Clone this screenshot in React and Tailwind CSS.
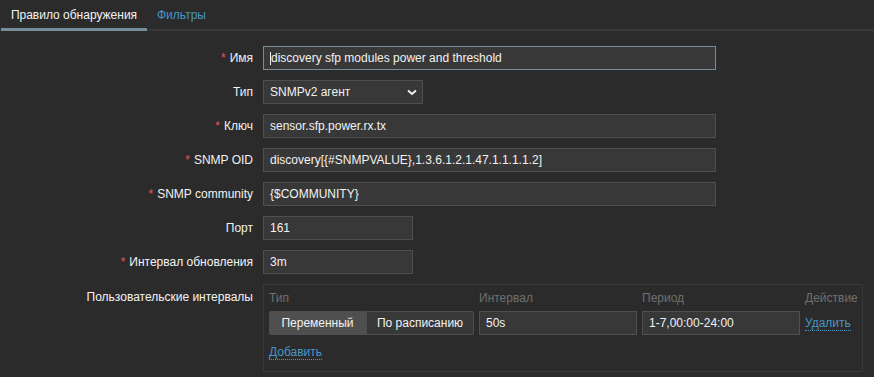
const inputCls =
  "h-[24px] bg-[#383838] border border-[#4f4f4f] px-[6px] flex items-center text-[#f2f2f2]";

function Row({ label, required, children }) {
  return (
    <div className="flex items-center mb-[10px]">
      <div className="w-[253px] text-right pr-0">
        {required && <span className="text-[#e45959] mr-[4px]">*</span>}
        {label}
      </div>
      <div className="ml-[10px]">{children}</div>
    </div>
  );
}

function App() {
  return (
    <div className="w-[874px] h-[377px] bg-[#2b2b2b] text-[#f2f2f2] text-[12px] leading-[14px] font-['Liberation_Sans',Arial,sans-serif] overflow-hidden">
      <div className="flex items-end h-[31px] border-b-[2px] border-[#383838]">
        <div className="ml-[1px] w-[146px] h-[31px] mb-[-2px] border-b-[3px] border-[#768d99] flex items-center justify-center pt-[1px]">
          Правило обнаружения
        </div>
        <div className="h-[29px] flex items-center pl-[10px] text-[#4796c4]">Фильтры</div>
      </div>

      <div className="pt-[15px]">
        <Row label="Имя" required>
          <div className={inputCls + " w-[453px] border-[#768d99]"}>
            <span className="w-[1px] h-[13px] bg-[#f2f2f2]" />
            discovery sfp modules power and threshold
          </div>
        </Row>
        <Row label="Тип">
          <div className={inputCls + " w-[160px] justify-between pr-[5px]"}>
            <span>SNMPv2 агент</span>
            <svg width="10" height="7" viewBox="0 0 10 7" className="mt-[1px]">
              <polyline points="1,1.5 5,5 9,1.5" fill="none" stroke="#f2f2f2" strokeWidth="2" />
            </svg>
          </div>
        </Row>
        <Row label="Ключ" required>
          <div className={inputCls + " w-[453px]"}>sensor.sfp.power.rx.tx</div>
        </Row>
        <Row label="SNMP OID" required>
          <div className={inputCls + " w-[453px]"}>
            discovery[{"{#SNMPVALUE}"},1.3.6.1.2.1.47.1.1.1.1.2]
          </div>
        </Row>
        <Row label="SNMP community" required>
          <div className={inputCls + " w-[453px]"}>{"{$COMMUNITY}"}</div>
        </Row>
        <Row label="Порт">
          <div className={inputCls + " w-[150px]"}>161</div>
        </Row>
        <Row label="Интервал обновления" required>
          <div className={inputCls + " w-[150px]"}>3m</div>
        </Row>

        <div className="flex items-start">
          <div className="w-[253px] text-right pt-[6px]">Пользовательские интервалы</div>
          <div className="ml-[10px] w-[600px] h-[88px] border border-[#383838] px-[5px] pt-[5px]">
            <div className="grid grid-cols-[205px_158px_158px_1fr] gap-x-[5px] text-[#6f6f6f]">
              <div className="h-[16px] flex items-center">Тип</div>
              <div className="h-[16px] flex items-center">Интервал</div>
              <div className="h-[16px] flex items-center">Период</div>
              <div className="h-[16px] flex items-center">Действие</div>
            </div>
            <div className="grid grid-cols-[205px_158px_158px_1fr] gap-x-[5px] mt-[5px] items-center">
              <div className="flex h-[24px]">
                <div className="w-[97px] bg-[#4f4f4f] rounded-l-[2px] flex items-center justify-center text-[#f2f2f2]">
                  Переменный
                </div>
                <div className="flex-1 bg-[#383838] border border-[#4f4f4f] rounded-r-[2px] flex items-center justify-center text-[#f2f2f2]">
                  По расписанию
                </div>
              </div>
              <div className={inputCls + " text-[#9a9a9a]"}>50s</div>
              <div className={inputCls + " text-[#9a9a9a]"}>1-7,00:00-24:00</div>
              <div>
                <span className="text-[#4796c4] border-b border-dotted border-[#4796c4]">Удалить</span>
              </div>
            </div>
            <div className="mt-[10px]">
              <span className="text-[#4796c4] border-b border-dotted border-[#4796c4]">Добавить</span>
            </div>
          </div>
        </div>
      </div>
    </div>
  );
}

export default App;
